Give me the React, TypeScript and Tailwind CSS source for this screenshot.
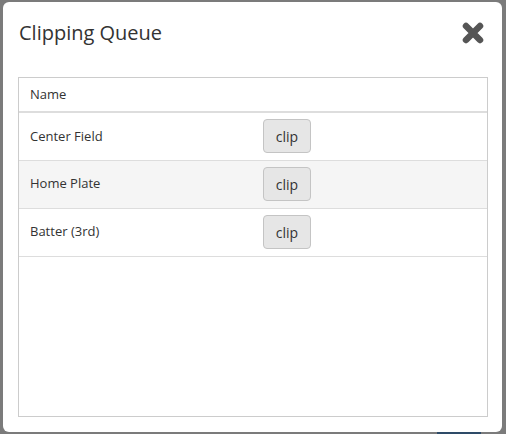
import React from 'react';

const rows = ['Center Field', 'Home Plate', 'Batter (3rd)'];

const CloseIcon = () => (
  <svg width="22" height="22" viewBox="0 0 22 22" className="block">
    <path
      d="M4 4 L18 18 M18 4 L4 18"
      stroke="#555555"
      strokeWidth="6.5"
      strokeLinecap="round"
    />
  </svg>
);

const App = () => {
  return (
    <div
      className="w-[506px] h-[434px] bg-[#7b7b7b] flex flex-col overflow-hidden"
      style={{ fontFamily: '"Open Sans", "Liberation Sans", sans-serif' }}
    >
      <div className="ml-[3px] mt-[2px] w-[499px] h-[430px] bg-white rounded-[6px] flex flex-col">
        {/* header */}
        <div className="flex items-center justify-between pl-[16px] pr-[18px] h-[61px]">
          <h4 className="text-[20px] leading-[28px] text-[#333333] font-normal">Clipping Queue</h4>
          <button className="mt-[1px]">
            <CloseIcon />
          </button>
        </div>

        {/* body */}
        <div className="ml-[15px] mt-[14px] w-[470px] h-[340px] border border-[#cccccc]">
          <table className="w-full border-collapse text-[13px] text-[#333333]">
            <thead>
              <tr className="border-b-2 border-[#dddddd]">
                <th className="w-[244px] h-[34px] pl-[11px] text-left font-normal">Name</th>
                <th />
              </tr>
            </thead>
            <tbody>
              {rows.map((name, i) => (
                <tr
                  key={name}
                  className={`h-[48px] border-b border-[#dddddd] ${i === 1 ? 'bg-[#f5f5f5]' : ''}`}
                >
                  <td className="pl-[11px]">{name}</td>
                  <td>
                    <button className="w-[48px] h-[34px] rounded-[4px] border border-[#c4c4c4] bg-[#e6e6e6] text-[14px] text-[#333333]">
                      clip
                    </button>
                  </td>
                </tr>
              ))}
            </tbody>
          </table>
        </div>
      </div>
      <div className="flex h-[2px]">
        <div className="ml-[437px] w-[44px] bg-[#2e4b68]" />
      </div>
    </div>
  );
};

export default App;
